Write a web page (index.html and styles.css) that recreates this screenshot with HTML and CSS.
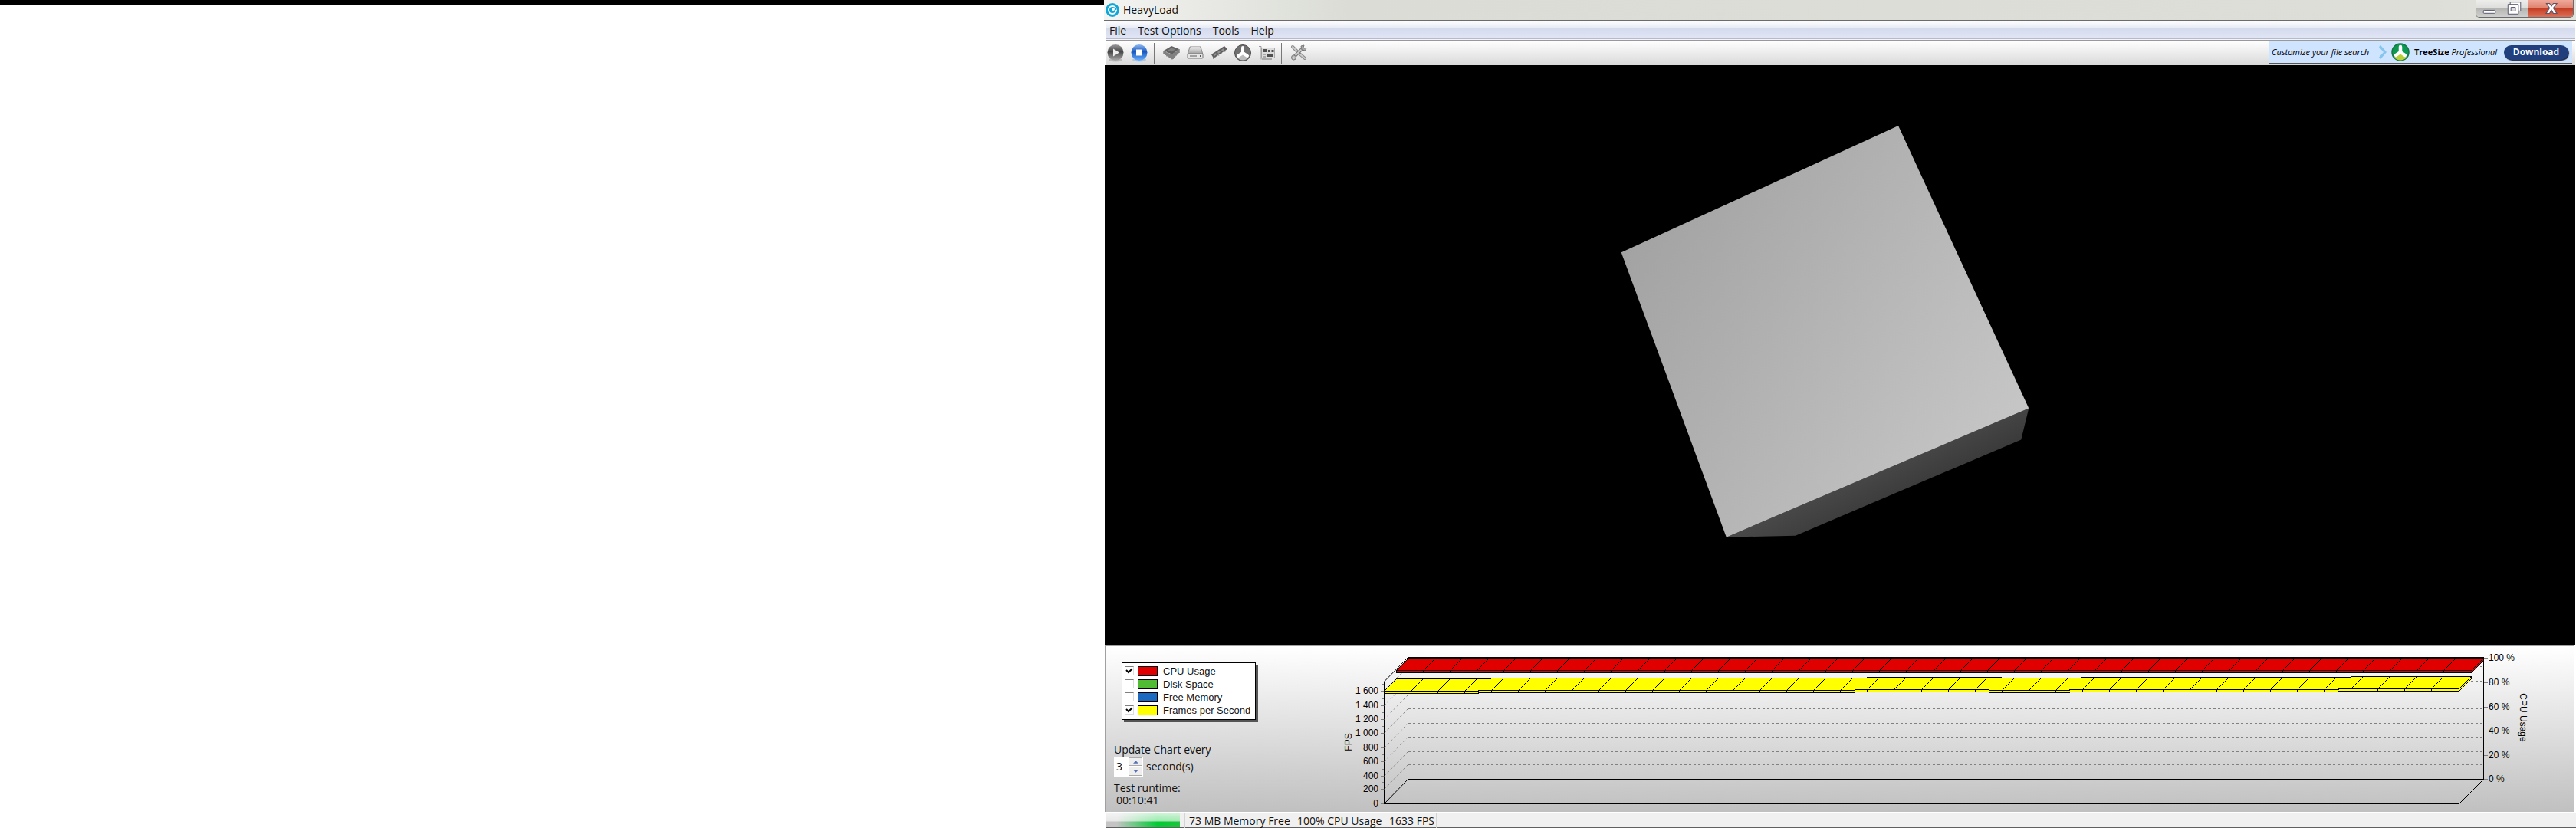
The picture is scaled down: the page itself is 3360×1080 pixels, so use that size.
FILE: index.html
```html
<!DOCTYPE html>
<html lang="en">
<head>
<meta charset="utf-8">
<title>HeavyLoad</title>
<link rel="stylesheet" href="styles.css">
</head>
<body>
<div class="desktop">
  <div class="blank-screen"></div>
  <main class="window">
    <header class="titlebar">
      <svg class="app-icon" viewBox="0 0 18 18" aria-hidden="true">
        <circle cx="9" cy="9" r="9" fill="#10a6d8"/>
        <circle cx="9" cy="9" r="5" fill="none" stroke="#fff" stroke-width="2"/>
        <path d="M9 9l3-4 3 3-4 3z" fill="#10a6d8"/><circle cx="10" cy="8" r="2" fill="#fff"/>
      </svg>
      <h1 class="title">HeavyLoad</h1>
      <div class="window-buttons">
        <button class="win-btn" aria-label="Minimize"><svg viewBox="0 0 34 22"><rect x="9.5" y="13.500" width="16" height="4" rx="1" fill="#fff" stroke="#53566b"/></svg></button>
        <button class="win-btn" aria-label="Restore"><svg viewBox="0 0 34 22"><path d="M10.500 2.500h14v12h-14z" fill="#fff" stroke="#53566b"/><path d="M7.500 5.500h14v13h-14z" fill="#fff" stroke="#53566b"/><path d="M11.500 9.500h6v5h-6z" fill="#ddd" stroke="#53566b"/></svg></button>
        <button class="win-btn close" aria-label="Close"><svg viewBox="0 0 58 22"><path d="M23.500 4.500h4l2.500 3.500 2.500-3.500h4.500l-4.500 6 4.500 7h-4.500l-2.500-4-2.500 4h-4.500l4.500-7z" fill="#fff" stroke="#5c5468" stroke-width="1.200"/></svg></button>
      </div>
    </header>

    <nav class="menubar">
      <button class="menu">File</button>
      <button class="menu">Test Options</button>
      <button class="menu">Tools</button>
      <button class="menu">Help</button>
    </nav>

    <div class="toolbar">
      <svg class="defs" aria-hidden="true"><defs>
        <linearGradient id="ballGrey" x2="0" y2="1"><stop offset="0" stop-color="#999"/><stop offset=".45" stop-color="#484848"/><stop offset="1" stop-color="#aaa"/></linearGradient>
        <linearGradient id="ballBlue" x2="0" y2="1"><stop offset="0" stop-color="#8eb7f2"/><stop offset=".45" stop-color="#1a58be"/><stop offset="1" stop-color="#66b0ff"/></linearGradient>
        <linearGradient id="metal" x2="0" y2="1"><stop offset="0" stop-color="#eee"/><stop offset="1" stop-color="#999"/></linearGradient>
      </defs></svg>
      <button class="tool" aria-label="Start test"><svg viewBox="0 0 24 24"><ellipse cx="12" cy="21" rx="9" ry="2.500" fill="#bbb"/><circle cx="12" cy="11.500" r="10.500" fill="url(#ballGrey)"/><path d="M9 6.500l8 5-8 5z" fill="#eee"/></svg></button>
      <button class="tool" aria-label="Stop test"><svg viewBox="0 0 24 24"><ellipse cx="12" cy="21" rx="9" ry="2.500" fill="#b5c6df"/><circle cx="12" cy="11.500" r="10.500" fill="url(#ballBlue)"/><path d="M8 7.500h8v8H8z" fill="#fff"/></svg></button>
      <span class="separator"></span>
      <button class="tool" aria-label="Stress CPU"><svg viewBox="0 0 24 24"><path d="M2 9l10-6 10 4-9 7z" fill="#626262"/><path d="M7 8.500l5-3 5 2-5 3z" fill="#828282"/><path d="M2 9v4l11 8 9-9V7l-9 7z" fill="#aaa"/><path d="M2 9v4M4 10v5M6 11.500v5M8 12.500v5M10 13v6M12 14v6M14 14v6M16 12v6M18 10.500v5M20 9v5M22 7v5" stroke="#666" stroke-width="1.200"/></svg></button>
      <button class="tool" aria-label="Write to disk"><svg viewBox="0 0 24 24"><path d="M5 4h14l3 10H2z" fill="url(#metal)" stroke="#888"/><path d="M2 13h20v5q0 1-1 1H3q-1 0-1-1z" fill="#e6e6e6" stroke="#777"/><path d="M5 16h9" stroke="#888" stroke-width="1.500"/><path d="M18 16h2" stroke="#555" stroke-width="2"/><path d="M6 5h12" stroke="#fff"/></svg></button>
      <button class="tool" aria-label="Allocate memory"><svg viewBox="0 0 24 24"><path d="M2 14L19 3l4 4L5 19z" fill="#606060"/><path d="M5 14l3-2 1 2-3 2zM10 11l3-2 1 2-3 2zM15 8l3-2 1 2-3 2z" fill="#929292"/><path d="M3 18l2 2M7 17l1 2M11 14l1 2M15 12l1 2M19 9l1 2" stroke="#999"/></svg></button>
      <button class="tool" aria-label="Simulate disk access"><svg viewBox="0 0 24 24"><circle cx="12" cy="12" r="10.500" fill="#707070" stroke="#505050"/><path d="M12 13L5 18.500a10 10 0 0 0 14 0z" fill="#bbb"/><path d="M12 5v7M12 12l-6 4M12 12l6 4" stroke="#fff" stroke-width="4" stroke-linecap="round"/></svg></button>
      <button class="tool" aria-label="Stress graphics"><svg viewBox="0 0 24 24"><path d="M5.500 5.500h17v13h-17z" fill="#ddd" stroke="#aaa"/><path d="M2 3.500h3v17" fill="none" stroke="#999"/><path d="M7 7h5v4H7zM14 8h3v3h-3zM18.500 8h3v3h-3zM13 13h7v4h-7z" fill="#505050"/><path d="M7 14h4M7 17h4M6 20h13" stroke="#999" stroke-width="1.500"/></svg></button>
      <span class="separator"></span>
      <button class="tool" aria-label="Options"><svg viewBox="0 0 24 24"><path d="M4 4l6 6M13 13l7 6" stroke="#888" stroke-width="4" stroke-linecap="round"/><path d="M4 4l6 6M14 14l6 5" stroke="#ccc" stroke-width="2" stroke-linecap="round"/><path d="M17 6L5 18" stroke="#777" stroke-width="4"/><path d="M17 6L5 18" stroke="#ccc" stroke-width="2"/><path d="M15 3l1 5 5 1 1-4-3 1-1-1 1-3z" fill="#aaa" stroke="#777"/><circle cx="5.500" cy="18" r="3" fill="#bbb" stroke="#777"/><circle cx="5" cy="18.500" r="1" fill="#fff"/></svg></button>

      <aside class="banner">
        <em class="banner-text">Customize your file search</em>
        <svg class="chevron" viewBox="0 0 10 18" aria-hidden="true"><path d="M1 1l7 8-7 8" fill="none" stroke="#86c5ee" stroke-width="3"/></svg>
        <svg class="brand" viewBox="0 0 24 24" aria-hidden="true"><circle cx="12" cy="12" r="11" fill="#0c9a50" stroke="#197648" stroke-width="1.500"/><path d="M12 12L4 19a11 11 0 0 0 16 0z" fill="#b7d03a"/><path d="M12 5v7M12 12l-6 4M12 12l6 4" stroke="#fff" stroke-width="4.500" stroke-linecap="round"/></svg>
        <span class="product"><b>TreeSize</b> <em>Professional</em></span>
        <button class="download">Download</button>
      </aside>
    </div>

    <section class="scene" aria-label="3D stress test">
      <svg viewBox="0 0 1916 755" role="img" aria-label="Rotating cube">
        <defs>
          <linearGradient id="face" gradientUnits="userSpaceOnUse" x1="700" y1="210" x2="1160" y2="490"><stop offset="0" stop-color="#a3a3a3"/><stop offset="1" stop-color="#c5c5c5"/></linearGradient>
          <linearGradient id="side" gradientUnits="userSpaceOnUse" x1="990" y1="520" x2="1015" y2="572"><stop offset="0" stop-color="#4b4b4b"/><stop offset="1" stop-color="#3b3b3b"/></linearGradient>
        </defs>
        <path d="M810 615L1204 447L1194 488L900 613Z" fill="url(#side)"/>
        <path d="M673 244L1034 79L1204 447L810 615Z" fill="url(#face)"/>
      </svg>
    </section>

    <section class="panel">
      <div class="settings">
        <fieldset class="legend">
          <label class="series"><input type="checkbox" checked><i class="swatch cpu"></i>CPU Usage</label>
          <label class="series"><input type="checkbox"><i class="swatch disk"></i>Disk Space</label>
          <label class="series"><input type="checkbox"><i class="swatch memory"></i>Free Memory</label>
          <label class="series"><input type="checkbox" checked><i class="swatch fps"></i>Frames per Second</label>
        </fieldset>
        <label class="interval-label" for="interval">Update Chart every</label>
        <div class="interval">
          <div class="spinner">
            <input id="interval" type="text" value="3">
            <div class="steps">
              <button aria-label="Increase"><svg viewBox="0 0 8 4"><path d="M0 4l4-4 4 4z"/></svg></button>
              <button aria-label="Decrease"><svg viewBox="0 0 8 4"><path d="M0 0l4 4 4-4z"/></svg></button>
            </div>
          </div>
          <span>second(s)</span>
        </div>
        <dl class="runtime"><dt>Test runtime:</dt><dd>00:10:41</dd></dl>
      </div>
      <svg class="chart" id="chart" viewBox="0 0 1618 216" role="img" aria-label="CPU usage and frames per second"></svg>
    </section>

    <footer class="statusbar">
      <progress class="progress" max="100" value="100" aria-label="Test running"></progress>
      <span class="cell memory-cell">73 MB Memory Free</span>
      <span class="cell cpu-cell">100% CPU Usage</span>
      <span class="cell fps-cell">1633 FPS</span>
    </footer>
  </main>
</div>
<script src="chart.js"></script>
</body>
</html>
```
FILE: chart.js
```javascript
// Draws the 3D ribbon chart: walls, grid, the two series and both axes.
const svg = document.getElementById('chart');
const NS = 'http://www.w3.org/2000/svg';

function add(name, attrs, text) {
  const el = document.createElementNS(NS, name);
  for (const key in attrs) el.setAttribute(key, attrs[key]);
  if (text) el.textContent = text;
  svg.appendChild(el);
}
const path = (d, cls) => add('path', { d, class: cls });

const left = 65.5, right = 1467.5, bottom = 205.5, depth = 32, backBottom = 173.5;
const backLeft = left + 31, backRight = right + depth;

// Walls and floor
path(`M${left} ${bottom}V46M${backLeft} 14.5V${backBottom}H${backRight}V14.5M${left} ${bottom}H${right}`, 'wall');
path(`M${left} 46L${backLeft} 14.5M${left} ${bottom}L${backLeft} ${backBottom}M${right} ${bottom}L${backRight} ${backBottom}`, 'slant');

// Grid on the back and left walls, with the left axis
const ticks = [205.5, 186.5, 169.5, 150.5, 132.5, 113.5, 95.5, 77.5, 58.5];
ticks.forEach((y, i) => {
  if (i > 0) {
    path(`M${backLeft} ${y - depth}H${backRight}`, 'grid');
    path(`M${left} ${y}L${backLeft} ${y - depth}`, 'grid slant');
  }
  path(`M61 ${y}H65`, 'tick');
  path(`M63 ${y - 9}H65`, 'tick');
  const label = i < 5 ? String(i * 200) : '1 ' + (i * 200 - 1000 + '').padStart(3, '0');
  add('text', { x: 58, y: Math.floor(y) + 4, class: 'axis end' }, label);
});
add('text', { transform: 'translate(23 125) rotate(-90)', class: 'axis mid' }, 'FPS');

// Right axis
[15.5, 47.5, 79.500, 110.5, 142.5, 173.5].forEach((y, i) => {
  path(`M1500 ${y}H1505`, 'tick');
  add('text', { x: 1506, y: Math.floor(y) + 4, class: 'axis' }, `${100 - i * 20} %`);
});
add('text', { transform: 'translate(1547 93) rotate(90)', class: 'axis mid' }, 'CPU Usage');

// A ribbon is a list of [start x, front y] runs, each one level stretch
function ribbon(runs, endX, cls) {
  const x0 = runs[0][0], last = runs[runs.length - 1][1];
  const front = (dy, dx) => runs.map(([x, y], i) => {
    const next = i + 1 < runs.length ? runs[i + 1][0] : endX;
    return `L${x + dx} ${y + dy}L${next + dx} ${y + dy}`;
  }).join('').replace(/^L/, 'M');
  const levelAt = x => runs.filter(r => r[0] <= x).pop()[1];
  path(front(-16, 16) + `L${endX + 16} ${last - 13}L${endX} ${last + 3}` +
    runs.slice().reverse().map(([x, y], i) => `L${i ? runs[runs.length - i][0] : endX} ${y + 3}L${x} ${y + 3}`).join('') +
    `L${x0} ${runs[0][1]}Z`, cls);
  path(front(0, 0), 'edge');
  path(`M${endX} ${last}L${endX + 16} ${last - 16}`, 'slant');
  for (let i = 1; i <= 40; i++) {
    const x = Math.round(x0 + i * 35.05) - 0.5;
    if (x > endX - 9) break;
    const y = levelAt(x);
    path(`M${x} ${y + 3}V${y}`, 'edge');
    path(`M${x} ${y}L${x + 16} ${y - 16}`, 'slant');
  }
}
ribbon([[81.5, 31.5]], 1483.5, 'ribbon red');
path('M97 14.500H1500', 'edge');
ribbon([[65.5, 58.5], [188.5, 57.5], [679.5, 56.5], [854.5, 57.5], [959.5, 56.5], [1310.5, 55.5]], 1467.5, 'ribbon yellow');
```
FILE: styles.css
```css
* { box-sizing: border-box; }
body { margin: 0; background: #fff; color: #111; font: 14px/20px "Segoe UI", "Open Sans", sans-serif; }
button { margin: 0; padding: 0; border: 0; background: none; color: inherit; font: inherit; }
svg { display: block; }
.desktop { display: grid; grid-template-columns: 3fr 4fr; min-height: 100vh; }
.blank-screen { border-top: 7px solid #000; }
.window { display: flex; flex-direction: column; min-width: 0; }

.titlebar { display: flex; align-items: center; height: 27px; padding: 0 3px 0 2px; background: linear-gradient(90deg, #f4f4f2, #e9eae6 120px, #dadcd5 320px, #dcded7 90%, #e2e4de); border-bottom: 1px solid #6c6c6c; }
.app-icon { width: 18px; height: 18px; }
.title { margin: 0 auto 0 5px; font-size: 14px; font-weight: 400; }
.window-buttons { display: flex; align-self: flex-start; height: 23px; border: 1px solid #6a6b70; border-top: 0; border-radius: 0 0 5px 5px; overflow: hidden; }
.win-btn { width: 34px; background: linear-gradient(#ededeb, #dededc 45%, #b4b5b2 50%, #cfd0cd); border-right: 1px solid #6a6b70; }
.win-btn svg { width: 100%; height: 22px; }
.win-btn.close { width: 58px; border-right: 0; background: linear-gradient(#efa899, #e08471 45%, #c43c22 50%, #dc7058); }

.menubar { display: flex; gap: 15px; height: 26px; margin: 0 1px 0 2px; padding: 0 0 0 5px; background: linear-gradient(#fff, #e8ebf5 9px, #d3daec 9px, #e1e6f5 23px, #b5bad0 23px, #b5bad0 24px, #f4f4f4 24px, #f4f4f4 25px, #999 25px); }
.menu { height: 26px; font-size: 14px; }

.toolbar { display: flex; align-items: center; gap: 7px; height: 32px; margin: 0 1px 0 2px; padding: 0 4px 0 1px; background: linear-gradient(#fff, #d9d9d9); }
.defs { position: absolute; width: 0; height: 0; }
.tool { width: 24px; height: 24px; }
.separator { width: 1px; height: 27px; margin-right: 3px; background: #777; }
.banner { display: flex; align-items: center; gap: 6px; height: 30px; margin-left: auto; padding: 0 5px 0 4px; background: #cfe4ff; border-bottom: 2px solid #555; color: #000; font: 12px/16px "Open Sans", sans-serif; }
.banner-text { width: 134px; white-space: nowrap; font-size: 11px; }
.chevron { width: 10px; height: 18px; }
.brand { width: 24px; height: 24px; }
.product { width: 111px; white-space: nowrap; font-size: 11px; }
.download { width: 84px; height: 19px; border-radius: 10px; background: #213f7c; box-shadow: 1px 1px 1px #223; color: #fff; font-size: 12px; font-weight: 700; line-height: 18px; }

.scene { flex: 1; min-height: 200px; margin: 0 1px; background: #000; display: grid; }
.scene svg { width: 100%; height: 100%; min-height: 0; }

.panel { display: grid; grid-template-columns: 298px 1fr; margin: 0 2px 0 1px; border-top: 2px solid #a0a0a0; border-left: 1px solid #a0a0a0; background: linear-gradient(#fff, #c0c0c0); }
.settings { padding: 21px 0 0 11px; font-size: 14px; line-height: 18px; }
.legend { width: 175px; margin: 0 0 30px 10px; padding: 2px 3px; border: 1px solid #000; background: #fff; box-shadow: 3px 3px 0 #555; font: 13px/17px "Liberation Sans", Arial, sans-serif; }
.series { display: flex; align-items: center; height: 17px; white-space: nowrap; }
.legend::after { content: ""; display: block; height: 1px; }
.series input { appearance: none; width: 12px; height: 12px; margin: 0 5px 0 0; border: 1px solid; border-color: #808080 #ddd #ddd #808080; background: #fff; }
.series input:checked { background: #fff url("data:image/svg+xml,%3Csvg xmlns='http://www.w3.org/2000/svg' viewBox='0 0 10 10'%3E%3Cpath d='M1 4l3 3 5-5' fill='none' stroke='%23000' stroke-width='2'/%3E%3C/svg%3E"); }
.swatch { width: 26px; height: 13px; margin-right: 7px; border: 1px solid #000; }
.cpu { background: #e00000; }
.disk { background: #4fbc34; }
.memory { background: #1b69c0; }
.fps { background: #ff0; }
.interval-label { display: block; }
.interval { display: flex; align-items: center; gap: 4px; height: 27px; }
.spinner { display: flex; width: 38px; height: 27px; padding: 1px; background: #fff; border-bottom: 1px solid #ddd; }
.spinner input { width: 18px; min-width: 0; padding: 0 0 0 2px; border: 0; background: none; font: inherit; }
.steps { display: grid; gap: 1px; width: 18px; }
.steps button { display: grid; place-items: center; border: 1px solid #aaa; background: #eee; }
.steps svg { width: 7px; height: 4px; fill: #5770b5; }
.runtime { margin: 6px 0 0; line-height: 16px; }
.runtime dd { margin: 0 0 0 3px; }

.chart { width: 100%; height: auto; font: 12px "Liberation Sans", Arial, sans-serif; }
.chart path { fill: none; stroke: #000; shape-rendering: crispEdges; }
.chart .slant { shape-rendering: auto; }
.chart .grid { stroke: #808080; stroke-dasharray: 3 3; }
.chart .tick { stroke: #808080; }
.chart .red { fill: #e00000; }
.chart .yellow { fill: #ff0; }
.end { text-anchor: end; }
.mid { text-anchor: middle; }

.statusbar { display: flex; height: 22px; margin: 0 0 0 2px; padding-top: 2px; background: linear-gradient(#fff 1px, #f0f0f0 1px, #f0f0f0 20px, #606060 20px, #606060 21px, #ddd 21px); line-height: 19px; }
.progress { appearance: none; width: 97px; height: 18px; margin-right: 6px; border: 0; }
.progress::-webkit-progress-bar { background: #ccc; }
.progress::-webkit-progress-value { background: linear-gradient(rgba(255,255,255,.8), rgba(255,255,255,.6) 10px, transparent 11px), linear-gradient(90deg, #c4c4c4 15%, #0c3 70%, #1cc43c); }
.cell { padding-left: 5px; border-left: 1px solid #d4d4d4; white-space: nowrap; font-size: 14px; }
.memory-cell { width: 141px; }
.cpu-cell { width: 120px; }
.fps-cell { width: 68px; border-right: 1px solid #d4d4d4; }
```
